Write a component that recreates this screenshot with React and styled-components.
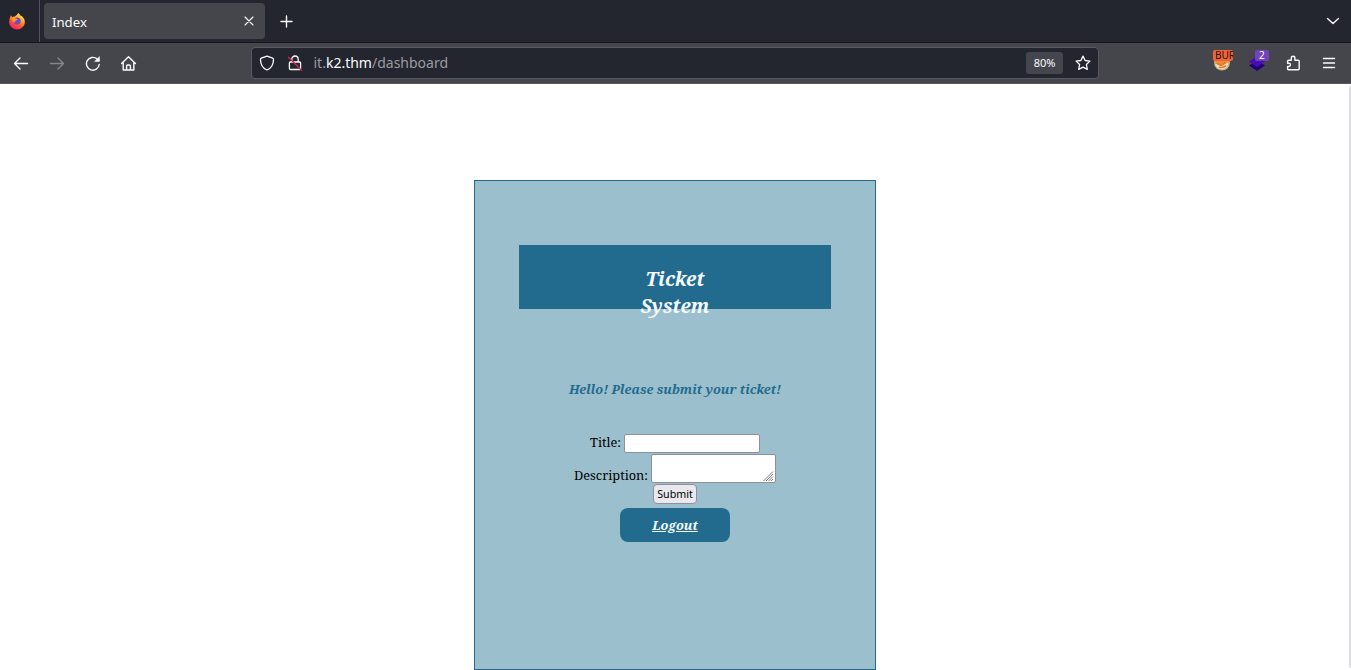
import React from "react";
import styled, { createGlobalStyle } from "styled-components";

const SERIF = '"Noto Serif", "Liberation Serif", serif';
const SANS = '"Noto Sans", sans-serif';

const GlobalStyle = createGlobalStyle`
  *, *::before, *::after { box-sizing: border-box; }
  html, body { margin: 0; padding: 0; background: #fff; overflow: hidden; }
  svg { flex-shrink: 0; }
`;

const Browser = styled.div`
  display: flex;
  flex-direction: column;
  height: 670px;
  width: 1351px;
  font-family: ${SANS};
  color: #fbfbfe;
`;

const TabBar = styled.header`
  display: flex;
  align-items: stretch;
  height: 43px;
  background: #23252f;
  border-bottom: 1px solid #15151f;
`;

const PinnedArea = styled.div`
  display: flex;
  width: 40px;
  padding: 12px 0 0 8px;
  border-right: 1px solid #52525e;
`;

const Tab = styled.div`
  display: flex;
  align-items: center;
  justify-content: space-between;
  width: 221px;
  height: 36px;
  margin: 3px 0 0 4px;
  padding: 0 10px 0 8px;
  border-radius: 4px;
  background: #45464b;
  font-size: 13.2px;
  line-height: 18px;
`;

const TabTitle = styled.span`
  padding-top: 2px;
`;

const TabAction = styled.div`
  display: flex;
  align-items: center;
  padding-left: ${(p) => p.$left}px;
`;

const Spacer = styled.div`
  flex: 1;
`;

const ListTabs = styled.div`
  display: flex;
  align-items: center;
  padding-right: 10px;
`;

const Toolbar = styled.nav`
  display: flex;
  align-items: center;
  height: 41px;
  background: #45464b;
  border-bottom: 1px solid #58595e;
`;

const NavButtons = styled.div`
  display: flex;
  width: 251px;
  padding-left: 13px;
  gap: 20px;
`;

const AddressBar = styled.div`
  display: flex;
  align-items: center;
  width: 848px;
  height: 32px;
  padding: 0 7px;
  border: 1px solid #585a62;
  border-radius: 4px;
  background: #23252f;
`;

const SiteIcons = styled.div`
  display: flex;
  gap: 12px;
`;

const Url = styled.span`
  margin-left: 10.5px;
  color: #9b9ca2;
  font-size: 14px;
  line-height: 20px;
`;

const Host = styled.span`
  color: #fbfbfe;
`;

const ZoomLevel = styled.span`
  width: 37px;
  height: 22px;
  margin-right: 12px;
  border-radius: 3px;
  background: #45464d;
  font-size: 11px;
  line-height: 22px;
  text-align: center;
`;

const Extensions = styled.div`
  display: flex;
  align-items: center;
  margin-left: auto;
  padding-right: 14px;
  gap: 20px;
`;

const Extension = styled.div`
  position: relative;
  display: flex;
  width: 16px;
  height: 28px;
  align-items: center;
`;

const Badge = styled.span`
  position: absolute;
  top: 1px;
  left: ${(p) => p.$left}px;
  width: ${(p) => p.$width}px;
  height: 11px;
  padding-left: ${(p) => p.$pad}px;
  overflow: hidden;
  border-radius: 2px;
  background: ${(p) => p.$bg};
  color: ${(p) => p.$fg};
  font-size: 10px;
  line-height: 11px;
  white-space: nowrap;
`;

const Page = styled.main`
  display: flex;
  flex: 1;
  align-items: flex-start;
  justify-content: center;
  padding: 96px 0 0;
  background: #fff;
  color: #000;
  font-family: ${SERIF};
`;

const ScrollTrack = styled.div`
  width: 2px;
  height: 582px;
  margin: -94px 0 0 auto;
  border-radius: 2px 0 0 2px;
  background: #dedee0;
`;

const Card = styled.section`
  display: flex;
  flex-direction: column;
  align-items: center;
  width: 402px;
  height: 490px;
  margin-left: 474px;
  padding-top: 64px;
  border: 1px solid #236b8e;
  background: #9cbfce;
`;

const Banner = styled.div`
  display: flex;
  justify-content: center;
  width: 312px;
  height: 64px;
  padding-top: 20px;
  background: #236b8e;
`;

const Heading = styled.h1`
  width: 110px;
  margin: 0;
  color: #f4fbff;
  font-size: 19.2px;
  font-style: italic;
  font-weight: 700;
  line-height: 27px;
  text-align: center;
`;

const Greeting = styled.h2`
  margin: 71px 0 0;
  color: #236b8e;
  font-size: 12.8px;
  font-style: italic;
  font-weight: 700;
  line-height: 18px;
  white-space: nowrap;
`;

const Form = styled.form`
  display: flex;
  flex-direction: column;
  align-items: center;
  margin-top: 36px;
`;

const Field = styled.label`
  display: flex;
  align-items: flex-end;
  gap: 3px;
  height: ${(p) => p.$height}px;
  margin-bottom: 1px;
  font-size: 12.8px;
  line-height: 18px;
`;

const FieldName = styled.span`
  margin-bottom: ${(p) => p.$bottom}px;
`;

const TitleInput = styled.input`
  width: 136px;
  height: 19px;
  margin: 0;
  border: 1px solid #8f8f9d;
  border-radius: 2px;
  background: #fff;
`;

const DescriptionBox = styled.div`
  display: flex;
  align-items: flex-end;
  justify-content: flex-end;
  width: 125px;
  height: 29px;
  border: 1px solid #8f8f9d;
  border-radius: 2px;
  background: #fff;
`;

const Submit = styled.button`
  width: 44px;
  height: 20px;
  padding: 0;
  border: 1px solid #8f8f9d;
  border-radius: 4px;
  background: #e9e9ed;
  color: #000;
  font: 10.67px/18px ${SANS};
`;

const Logout = styled.a`
  width: 110px;
  height: 34px;
  margin-top: 4px;
  border-radius: 8px;
  background: #236b8e;
  color: #f4fbff;
  font-size: 12.8px;
  font-style: italic;
  font-weight: 700;
  line-height: 34px;
  text-align: center;
  text-decoration: underline;
`;

const Line = ({ size = 16, width = 1.4, color = "#fbfbfe", children }) => (
  <svg width={size} height={size} viewBox={`0 0 ${size} ${size}`} fill="none" stroke={color}
    strokeWidth={width} strokeLinecap="round" strokeLinejoin="round">
    {children}
  </svg>
);

const Firefox = () => (
  <svg width="18" height="18" viewBox="0 0 18 18">
    <defs>
      <linearGradient id="flame" x1="0.8" y1="0.05" x2="0.25" y2="1">
        <stop offset="0" stopColor="#fff14a" />
        <stop offset="0.35" stopColor="#ffa52c" />
        <stop offset="0.65" stopColor="#ff5038" />
        <stop offset="1" stopColor="#ed206c" />
      </linearGradient>
    </defs>
    <path d="M3 3.2 4.2 5.2Q5.2 4.3 6.7 4.4Q8.8 3.8 10.2 1Q12 2.2 12.9 4.2L13.6 3.8Q16.9 6.7 16.9 10A7.9 7.4 0 0 1 1.1 10Q1 6.2 3 3.2Z" fill="url(#flame)" />
    <path d="M8 5.6Q12.8 5.3 12.7 9.2Q12.4 12.4 9.1 12.6Q5.5 12.3 5.3 9.3Q6.7 10 8.1 8.7L6 7.5Z" fill="#7548c6" />
    <path d="M3.8 6.3Q5.8 5.4 7.7 6.6L9.7 7.3Q9 8.5 7.4 8.5Q6.1 9.2 7.2 10.8Q4.2 10.5 3.8 6.3Z" fill="#ff9c20" />
  </svg>
);

const BurgerFace = () => (
  <svg width="18" height="18" viewBox="0 0 18 18">
    <circle cx="9" cy="8.5" r="8" fill="#c9b18b" />
    <circle cx="9" cy="8" r="6.6" fill="#f18b36" />
    <path d="M2 10.2q3-.8 6 1.2l6-2.8 1.5 1Q14 15 9 15.3 4 15 2 10.2Z" fill="#f4dfbd" />
    <path d="m4 9.5 4 2 5-3M6 13.2q4 1 7-1.6" fill="none" stroke="#e0762a" strokeWidth="1.5" />
  </svg>
);

const Layers = () => (
  <svg width="18" height="18" viewBox="0 0 18 18">
    <path d="m0 11.5 8-5 8 5-8 5.5Z" fill="#210078" />
    <path d="m0 7.5 8-5 8 5-8 5.5Z" fill="#4a0bb5" />
  </svg>
);

const ResizeGrip = () => (
  <svg width="12" height="11" viewBox="0 0 12 11" stroke="#66666c" strokeWidth="0.9">
    <path d="M.5 10 10 .5M3 10l7-7M5.5 10l4.5-4.5M8 10l2-2" />
  </svg>
);

export default function App() {
  return (
    <Browser>
      <GlobalStyle />
      <TabBar>
        <PinnedArea><Firefox /></PinnedArea>
        <Tab>
          <TabTitle>Index</TabTitle>
          <Line size={12} width={1.1}><path d="m2 2 8 8m0-8-8 8" /></Line>
        </Tab>
        <TabAction $left={15}>
          <Line size={14}><path d="M6.5 2v11M1 7.5h11" /></Line>
        </TabAction>
        <Spacer />
        <ListTabs>
          <Line><path d="m2.5 5.5 5.5 5 5.5-5" /></Line>
        </ListTabs>
      </TabBar>
      <Toolbar>
        <NavButtons>
          <Line><path d="M14.5 8.5h-13M7 3 1.5 8.5 7 14" /></Line>
          <Line color="#85868b"><path d="M1.5 8.5h13M9 3l5.5 5.5L9 14" /></Line>
          <Line>
            <path d="M14.2 9.5A6.4 6.4 0 1 1 12 3.9l1.7 1.3" />
            <path d="M14.4 1.9v4.5H9.9Z" fill="#fbfbfe" strokeWidth="0.6" />
          </Line>
          <Line><path d="M.6 8.6 7.5 1.8l6.9 6.8M2.2 7.4V15h10.6V7.4M5.6 15v-4a1 1 0 0 1 1-1h1.8a1 1 0 0 1 1 1v4" /></Line>
        </NavButtons>
        <AddressBar>
          <SiteIcons>
            <Line width={1.3}><path d="M8 1.1 13.7 3.2q.8.3.8 1.2Q14.5 12 8 15 1.5 12 1.5 4.4q0-.9.8-1.2Z" /></Line>
            <Line width={1.3}>
              <path d="M4.8 7V4.2a3.2 3.2 0 0 1 6.4 0V7M3.4 7h9.2q1 0 1 1v5.5q0 1-1 1H3.4q-1 0-1-1V8q0-1 1-1Z" />
              <path d="m1.5 2.3 13 13" stroke="#d72650" />
            </Line>
          </SiteIcons>
          <Url>it.<Host>k2.thm</Host>/dashboard</Url>
          <Spacer />
          <ZoomLevel>80%</ZoomLevel>
          <Line width={1.3}><path d="m8 1.1 2.1 4.4 4.8.6-3.5 3.4.9 4.9L8 12.1l-4.3 2.3.9-4.9L1.1 6.1l4.8-.6Z" /></Line>
        </AddressBar>
        <Extensions>
          <Extension>
            <BurgerFace />
            <Badge $left={0} $width={20} $pad={2} $bg="#f0643b" $fg="#24110c">BURP</Badge>
          </Extension>
          <Extension>
            <Layers />
            <Badge $left={6} $width={14} $pad={4} $bg="#7044bd" $fg="#fff">2</Badge>
          </Extension>
          <Line><path d="M3.6 5.2h2.7V3a1.8 1.8 0 0 1 3.6 0v2.2h3.3q1 0 1 1v7.6q0 1-1 1H3.6q-1 0-1-1v-2.3h1.2a1.6 1.6 0 0 0 0-3.3H2.6v-2q0-1 1-1Z" /></Line>
          <Line><path d="M2.5 3.5h11M2.5 8h11M2.5 12.5h11" /></Line>
        </Extensions>
      </Toolbar>
      <Page>
        <Card>
          <Banner><Heading>Ticket<br />System</Heading></Banner>
          <Greeting>Hello! Please submit your ticket!</Greeting>
          <Form>
            <Field $height={19}>
              <FieldName $bottom={2}>Title:</FieldName>
              <TitleInput aria-label="Title" />
            </Field>
            <Field $height={29}>
              <FieldName $bottom={-1}>Description:</FieldName>
              <DescriptionBox><ResizeGrip /></DescriptionBox>
            </Field>
            <Submit type="button">Submit</Submit>
          </Form>
          <Logout>Logout</Logout>
        </Card>
        <ScrollTrack />
      </Page>
    </Browser>
  );
}
